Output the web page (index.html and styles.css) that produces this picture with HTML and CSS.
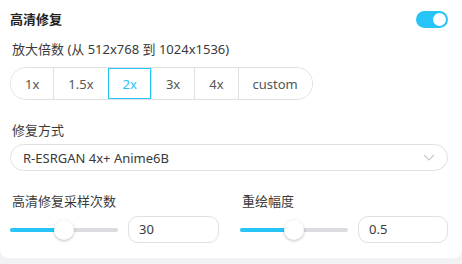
FILE: index.html
```html
<!DOCTYPE html>
<html>
<head>
  <meta charset="UTF-8">
  <title>高清修复</title>
  <link rel="stylesheet" href="styles.css">
</head>
<body>
  <div class="card">
    <div class="title-row">
      <span class="title">高清修复</span>
      <span class="toggle on"><span class="knob"></span></span>
    </div>

    <div class="label first">放大倍数 (从 512x768 到 1024x1536)</div>
    <div class="btn-group">
      <button>1x</button>
      <button>1.5x</button>
      <button class="active">2x</button>
      <button>3x</button>
      <button>4x</button>
      <button>custom</button>
    </div>

    <div class="label">修复方式</div>
    <div class="select">
      <span>R-ESRGAN 4x+ Anime6B</span>
      <svg class="chevron" width="12" height="7" viewBox="0 0 12 7">
        <path d="M1 1 L6 6 L11 1" fill="none" stroke="#c8c8c8" stroke-width="1.2"/>
      </svg>
    </div>

    <div class="cols">
      <div class="col">
        <div class="label">高清修复采样次数</div>
        <div class="slider-row">
          <div class="slider">
            <div class="fill" style="width: 50%"></div>
            <div class="thumb" style="left: 50%"></div>
          </div>
          <div class="num">30</div>
        </div>
      </div>
      <div class="col">
        <div class="label">重绘幅度</div>
        <div class="slider-row">
          <div class="slider">
            <div class="fill" style="width: 50%"></div>
            <div class="thumb" style="left: 50%"></div>
          </div>
          <div class="num">0.5</div>
        </div>
      </div>
    </div>
  </div>
</body>
</html>
```

FILE: styles.css
```css
body {
  margin: 0;
  padding: 0;
  background: #f2f2f4;
  font-family: 'Noto Sans', 'Noto Sans CJK SC', sans-serif;
  font-size: 13px;
  color: #3a3a3a;
}
.card {
  width: 462px;
  box-sizing: border-box;
  background: #fff;
  border-radius: 0 0 8px 8px;
  padding: 10px 14px 15px 10px;
}
.title-row {
  display: flex;
  justify-content: space-between;
  align-items: center;
  height: 18px;
}
.title {
  font-weight: bold;
  color: #222;
  line-height: 18px;
}
.toggle {
  width: 32px;
  height: 17px;
  border-radius: 9px;
  background: #26c4f7;
  display: flex;
  align-items: center;
  justify-content: flex-end;
  padding: 0 2px;
  box-sizing: border-box;
}
.toggle .knob {
  width: 13px;
  height: 13px;
  border-radius: 50%;
  background: #fff;
}
.label {
  line-height: 18px;
  margin-top: 21px;
  padding-left: 2px;
}
.label.first {
  margin-top: 12px;
}
.btn-group {
  display: inline-flex;
  margin-top: 9px;
  height: 33px;
  border: 1px solid #e0e0e2;
  border-radius: 16px;
  box-sizing: border-box;
  overflow: hidden;
}
.btn-group button {
  font: inherit;
  color: #555;
  background: #fff;
  border: none;
  border-left: 1px solid #e0e0e2;
  padding: 0 14px;
  height: 31px;
  margin: 0;
  cursor: pointer;
}
.btn-group button:first-child {
  border-left: none;
}
.btn-group button.active {
  color: #26c4f7;
  outline: 1px solid #26c4f7;
  outline-offset: -1px;
}
.select {
  margin-top: 5px;
  height: 27px;
  border: 1px solid #e0e0e2;
  border-radius: 14px;
  box-sizing: border-box;
  display: flex;
  align-items: center;
  justify-content: space-between;
  padding: 0 12px;
}
.cols {
  display: grid;
  grid-template-columns: 209px 208px;
  column-gap: 21px;
}
.slider-row {
  display: flex;
  align-items: center;
  gap: 10px;
  margin-top: 6px;
}
.slider {
  position: relative;
  width: 108px;
  height: 4px;
  border-radius: 2px;
  background: #dcdce0;
}
.slider .fill {
  height: 4px;
  border-radius: 2px;
  background: #26c4f7;
}
.slider .thumb {
  position: absolute;
  top: 50%;
  width: 20px;
  height: 20px;
  margin: -10px 0 0 -10px;
  border-radius: 50%;
  background: #fff;
  box-shadow: 0 1px 3px rgba(0, 0, 0, 0.25);
}
.num {
  flex: 1;
  height: 27px;
  border: 1px solid #e0e0e2;
  border-radius: 10px;
  box-sizing: border-box;
  padding-left: 10px;
  line-height: 25px;
}
```
